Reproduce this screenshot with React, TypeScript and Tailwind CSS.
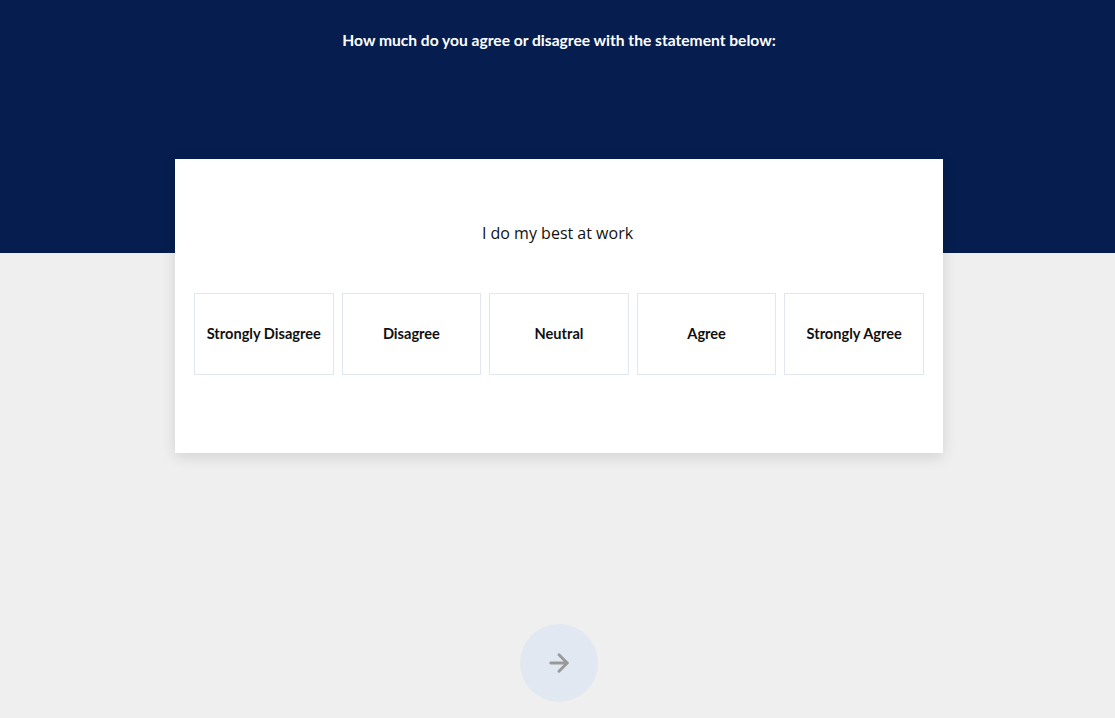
import { ArrowRight } from 'lucide-react';

const OPTIONS = ['Strongly Disagree', 'Disagree', 'Neutral', 'Agree', 'Strongly Agree'];

export default function App() {
  return (
    <div className="min-h-[718px] bg-[#efefef] font-['Lato',sans-serif]">
      <header className="h-[253px] bg-[#061e4f] pl-[3px] pt-[30px] text-center">
        <h1 className="text-[15.6px] font-bold leading-[20px] text-white">
          How much do you agree or disagree with the statement below:
        </h1>
      </header>

      <main className="-mt-[94px] flex justify-center pl-[3px]">
        <section className="h-[294px] w-[768px] bg-white px-[19px] pt-[62px] shadow-[0_4px_14px_rgba(0,0,0,0.12)]">
          <p className="pr-[3px] text-center font-['Open_Sans',sans-serif] text-[16px] leading-[24px] text-[#111]">
            I do my best at work
          </p>
          <ul className="mt-[48px] grid grid-cols-5 gap-[8px]">
            {OPTIONS.map((o) => (
              <li key={o}>
                <button className="flex h-[82px] w-full items-center justify-center border border-[#e1e6ef] bg-white text-[14.6px] font-bold text-[#111]">
                  {o}
                </button>
              </li>
            ))}
          </ul>
        </section>
      </main>

      <div className="mt-[171px] flex justify-center pl-[3px]">
        <button className="flex h-[78px] w-[78px] items-center justify-center rounded-full bg-[#e1e8f1] text-[#999]">
          <ArrowRight size={28} strokeWidth={2.5} />
        </button>
      </div>
    </div>
  );
}
